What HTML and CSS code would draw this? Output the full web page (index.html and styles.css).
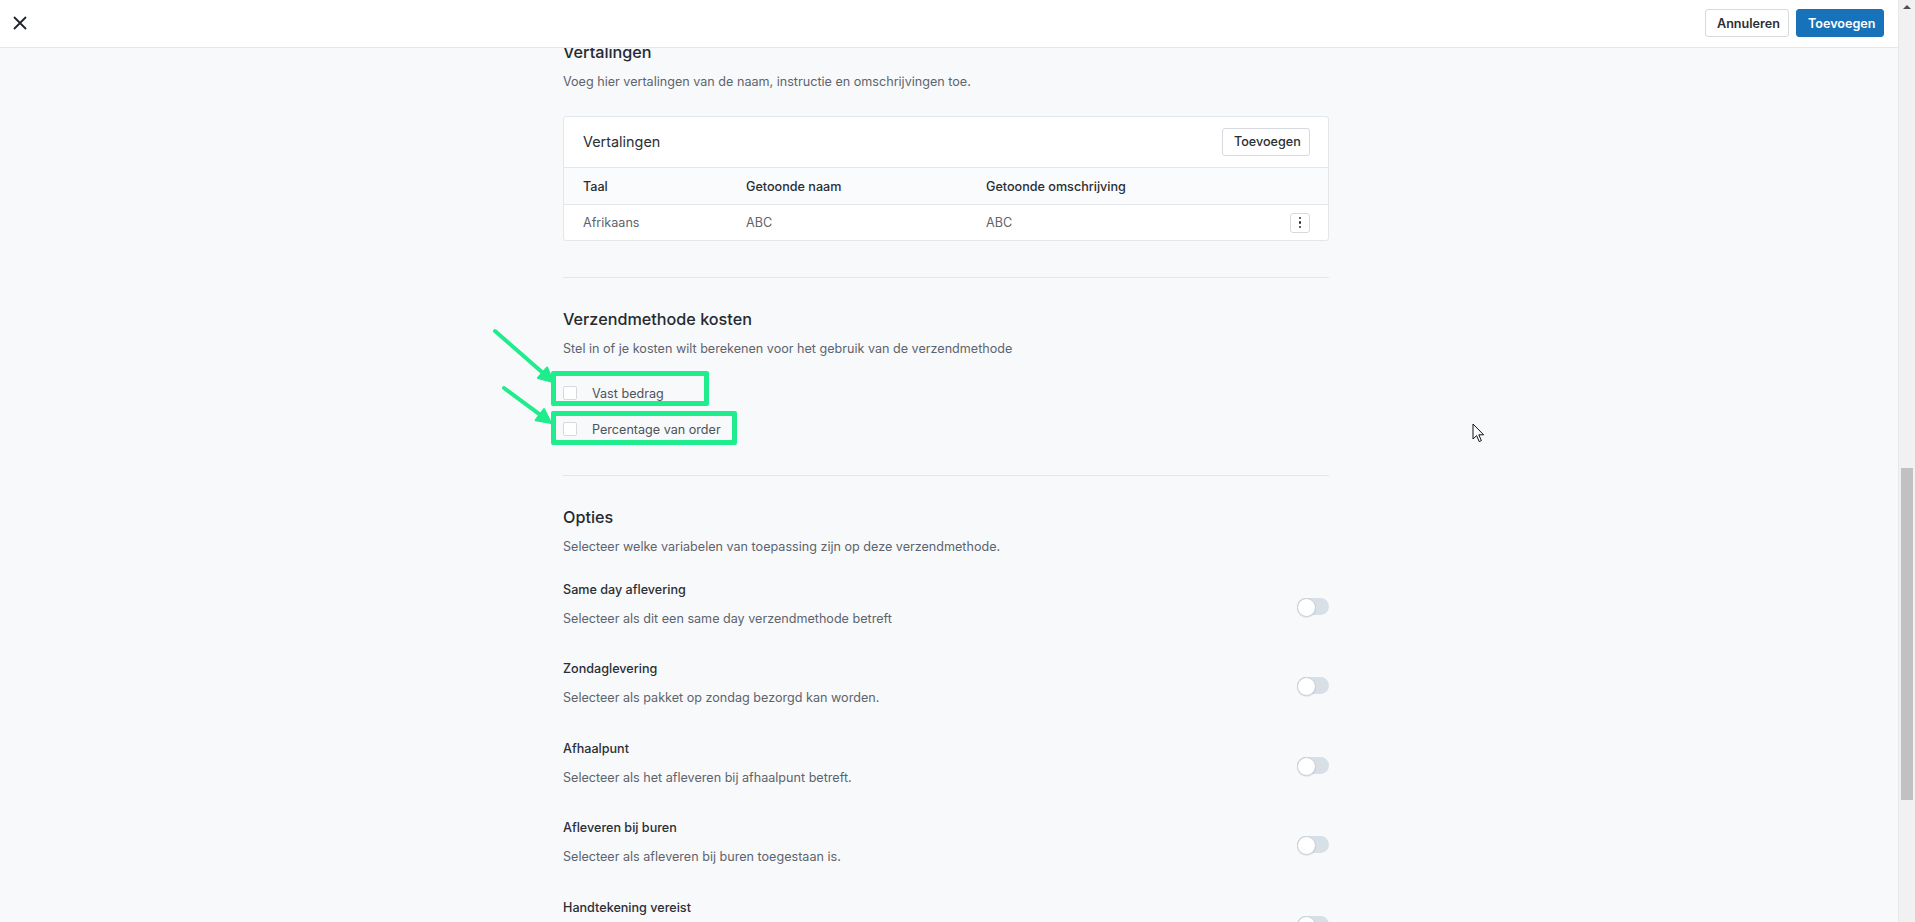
FILE: index.html
```html
<!DOCTYPE html>
<html lang="nl">
<head>
    <meta charset="UTF-8">
    <meta name="viewport" content="width=device-width, initial-scale=1.0">
    <title>Verzendmethode toevoegen</title>

    <link rel="stylesheet" href="styles.css">
</head>

<body>

    <div class="page">

        <header class="topbar">
            <button class="close-btn" aria-label="Sluiten">
                <svg width="14" height="14" viewBox="0 0 14 14">
                    <path d="M1.5 1.5 L12.5 12.5 M12.5 1.5 L1.5 12.5" stroke="#1f2329" stroke-width="1.8" stroke-linecap="round"/>
                </svg>
            </button>
            <div class="topbar-actions">
                <button class="btn">Annuleren</button>
                <button class="btn btn-primary">Toevoegen</button>
            </div>
        </header>

        <main class="content">

            <section class="section section-translations">
                <h2>Vertalingen</h2>
                <p class="section-desc">Voeg hier vertalingen van de naam, instructie en omschrijvingen toe.</p>

                <div class="card">
                    <div class="card-header">
                        <span class="card-title">Vertalingen</span>
                        <button class="btn btn-small">Toevoegen</button>
                    </div>
                    <div class="table-row table-head">
                        <span>Taal</span>
                        <span>Getoonde naam</span>
                        <span>Getoonde omschrijving</span>
                        <span></span>
                    </div>
                    <div class="table-row">
                        <span>Afrikaans</span>
                        <span>ABC</span>
                        <span>ABC</span>
                        <button class="kebab" aria-label="Meer">
                            <i></i><i></i><i></i>
                        </button>
                    </div>
                </div>
            </section>

            <section class="section section-costs">
                <h2>Verzendmethode kosten</h2>
                <p class="section-desc">Stel in of je kosten wilt berekenen voor het gebruik van de verzendmethode</p>

                <div class="checks">
                    <label class="check-row">
                        <span class="checkbox"></span>
                        <span>Vast bedrag</span>
                        <span class="mark mark-one"></span>
                    </label>
                    <label class="check-row">
                        <span class="checkbox"></span>
                        <span>Percentage van order</span>
                        <span class="mark mark-two"></span>
                    </label>
                </div>

                <!-- annotatie pijlen -->
                <svg class="arrows" width="80" height="120" viewBox="0 0 80 120">
                    <g stroke="#1fec8c" stroke-width="4" stroke-linecap="round" fill="#1fec8c">
                        <line x1="12" y1="13" x2="60" y2="55"/>
                        <polygon points="70,64 54.9,60 64.1,49.5" stroke-linejoin="round" stroke-width="2"/>
                        <line x1="21" y1="70" x2="57" y2="96.6"/>
                        <polygon points="68,105 52.6,102.2 61,91" stroke-linejoin="round" stroke-width="2"/>
                    </g>
                </svg>
            </section>

            <section class="section section-options">
                <h2>Opties</h2>
                <p class="section-desc">Selecteer welke variabelen van toepassing zijn op deze verzendmethode.</p>

                <div class="options">
                    <div class="option">
                        <div class="option-text">
                            <p class="option-title">Same day aflevering</p>
                            <p class="option-desc">Selecteer als dit een same day verzendmethode betreft</p>
                        </div>
                        <span class="toggle"></span>
                    </div>
                    <div class="option">
                        <div class="option-text">
                            <p class="option-title">Zondaglevering</p>
                            <p class="option-desc">Selecteer als pakket op zondag bezorgd kan worden.</p>
                        </div>
                        <span class="toggle"></span>
                    </div>
                    <div class="option">
                        <div class="option-text">
                            <p class="option-title">Afhaalpunt</p>
                            <p class="option-desc">Selecteer als het afleveren bij afhaalpunt betreft.</p>
                        </div>
                        <span class="toggle"></span>
                    </div>
                    <div class="option">
                        <div class="option-text">
                            <p class="option-title">Afleveren bij buren</p>
                            <p class="option-desc">Selecteer als afleveren bij buren toegestaan is.</p>
                        </div>
                        <span class="toggle"></span>
                    </div>
                    <div class="option">
                        <div class="option-text">
                            <p class="option-title">Handtekening vereist</p>
                        </div>
                        <span class="toggle"></span>
                    </div>
                </div>
            </section>
        </main>

        <svg class="cursor" width="13" height="20" viewBox="0 0 13 20">
            <path d="M1 1 L1 16 L4.6 12.6 L7.2 18.6 L9.4 17.6 L6.8 11.8 L11.6 11.8 Z" fill="#fff" stroke="#111" stroke-width="1" stroke-linejoin="round"/>
        </svg>
    </div>

    <div class="scrollbar">
        <span class="scroll-arrow"></span>
        <span class="scroll-thumb"></span>
    </div>

</body>
</html>
```

FILE: styles.css
```css
*{
    padding: 0;
    margin: 0;
    box-sizing: border-box;
    font-family: Inter, "Noto Sans", Arial, sans-serif;
}
body{
    display: flex;
    height: 100vh;
    overflow: hidden;
    background-color: #f8f9fb;
    color: #23272e;
}

.page{
    flex: 1;
    position: relative;
    overflow: hidden;
    background-color: #f8f9fb;
}

/* top bar ligt over de gescrollde inhoud */
.topbar{
    position: absolute;
    top: 0;
    left: 0;
    right: 0;
    z-index: 5;
    height: 48px;
    display: flex;
    align-items: center;
    justify-content: space-between;
    padding: 0 14px 1px 13px;
    background-color: white;
    border-bottom: 1px solid #e5e7ea;
}
.close-btn{
    border: none;
    background: transparent;
    width: 14px;
    height: 14px;
    display: flex;
}
.topbar-actions{
    display: flex;
    gap: 7px;
}

.btn{
    height: 28px;
    padding: 0 11px;
    border: 1px solid #d6dadf;
    border-radius: 3px;
    background-color: white;
    color: #2a2e35;
    font-size: 12.6px;
    font-weight: 600;
}
.topbar .btn{
    width: 84px;
}
.topbar .btn-primary{
    width: 88px;
    background-color: #1772ba;
    border-color: #1772ba;
    color: white;
}
.btn-small{
    width: 88px;
    font-weight: 500;
}

.content{
    position: relative;
    width: 766px;
    margin-left: calc(50% - 386px);
    padding-top: 11px;
}

.section{
    position: relative;
    padding-top: 31px;
    border-bottom: 1px solid #e3e6ea;
}
.section h2{
    font-size: 16.2px;
    line-height: 20px;
    font-weight: 500;
    color: #252a31;
}
.section-desc{
    margin-top: 11px;
    font-size: 12.6px;
    line-height: 18px;
    color: #5d646d;
}

.section-translations{
    padding-bottom: 36px;
}
.card{
    margin-top: 25px;
    background-color: white;
    border: 1px solid #e3e6ea;
    border-radius: 3px;
}
.card-header{
    height: 51px;
    display: flex;
    align-items: center;
    justify-content: space-between;
    padding: 0 18px 1px 19px;
    border-bottom: 1px solid #e3e6ea;
}
.card-title{
    font-size: 14.4px;
    font-weight: 400;
    color: #2a2e35;
}
.table-row{
    display: grid;
    grid-template-columns: 163px 240px 1fr 20px;
    align-items: center;
    height: 35px;
    padding: 0 18px 0 19px;
    font-size: 12.6px;
    color: #5d646d;
}
.table-head{
    height: 37px;
    background-color: #fafbfc;
    border-bottom: 1px solid #e3e6ea;
    font-weight: 500;
    color: #2a2e35;
}
.kebab{
    width: 20px;
    height: 20px;
    border: 1px solid #d6dadf;
    border-radius: 3px;
    background-color: white;
    display: flex;
    flex-direction: column;
    align-items: center;
    justify-content: center;
    gap: 2px;
}
.kebab i{
    width: 2.5px;
    height: 2.5px;
    border-radius: 50%;
    background-color: #2a2e35;
}

.section-costs{
    padding-bottom: 28px;
}
.checks{
    margin-top: 17px;
}
.check-row{
    position: relative;
    height: 36px;
    display: flex;
    align-items: center;
    gap: 15px;
    font-size: 12.6px;
    color: #4c535c;
}
.checkbox{
    width: 14px;
    height: 14px;
    background-color: white;
    border: 1px solid #d5d9de;
    border-radius: 2px;
}
.mark{
    position: absolute;
    left: -12px;
    border: 5px solid #1fec8c;
    border-radius: 2px;
}
.mark-one{
    top: -4px;
    width: 158px;
    height: 35px;
}
.mark-two{
    top: 0;
    width: 186px;
    height: 34px;
}
.arrows{
    position: absolute;
    left: -80px;
    top: 40px;
}

.section-options{
    border-bottom: none;
}
.options{
    margin-top: 25px;
    display: flex;
    flex-direction: column;
    gap: 32.4px;
}
.option{
    display: flex;
    align-items: center;
    justify-content: space-between;
}
.option-text{
    min-height: 47px;
}
.option-title{
    font-size: 12.6px;
    line-height: 18px;
    font-weight: 500;
    color: #2a2e35;
}
.option-desc{
    margin-top: 11px;
    font-size: 12.6px;
    line-height: 18px;
    color: #5d646d;
}
.toggle{
    position: relative;
    width: 32px;
    height: 17px;
    margin-top: 4px;
    border-radius: 9px;
    background-color: #d7dfe7;
}
.toggle::before{
    content: "";
    position: absolute;
    left: 0;
    top: 0;
    width: 17px;
    height: 17px;
    border-radius: 50%;
    background-color: white;
    border: 1px solid #c8cfd6;
    box-shadow: 0 1px 1px rgba(0, 0, 0, 0.08);
}

.cursor{
    position: absolute;
    left: 1472px;
    top: 423px;
    z-index: 6;
}

.scrollbar{
    width: 17px;
    flex-shrink: 0;
    display: flex;
    flex-direction: column;
    align-items: center;
    background-color: #f1f1f1;
    border-left: 1px solid #e8e8e8;
}
.scroll-arrow{
    margin-top: 5px;
    width: 0;
    height: 0;
    border-left: 4px solid transparent;
    border-right: 4px solid transparent;
    border-bottom: 4px solid #505050;
}
.scroll-thumb{
    margin-top: 459px;
    width: 12px;
    height: 332px;
    background-color: #c1c1c1;
}
```
